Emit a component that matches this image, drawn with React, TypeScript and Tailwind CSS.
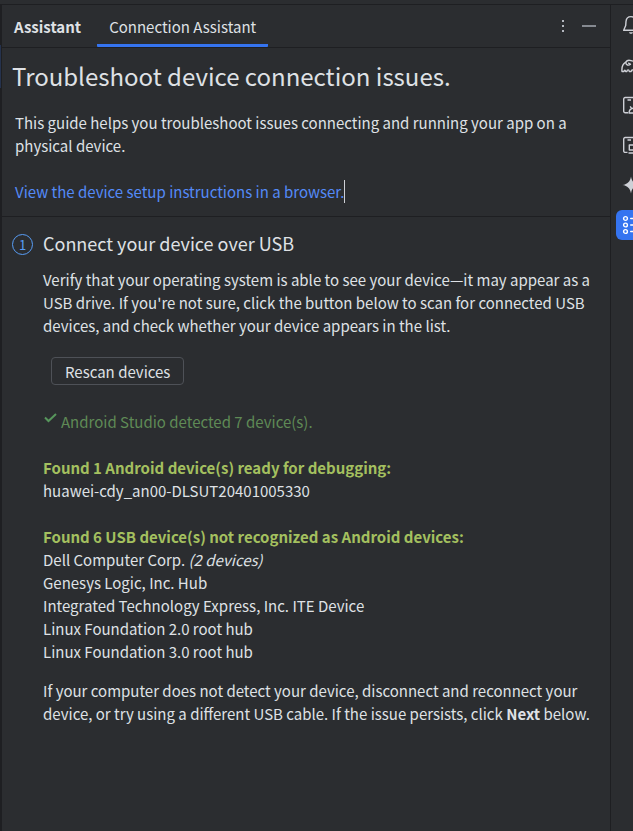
import React from "react";

const otherDevices = [
  { name: "Dell Computer Corp.", note: "(2 devices)" },
  { name: "Genesys Logic, Inc. Hub" },
  { name: "Integrated Technology Express, Inc. ITE Device" },
  { name: "Linux Foundation 2.0 root hub" },
  { name: "Linux Foundation 3.0 root hub" },
];

function BellIcon() {
  return (
    <svg width="20" height="20" viewBox="0 0 20 20" fill="none" stroke="#ced0d6" strokeWidth="1.4" strokeLinejoin="round">
      <path d="M10 1.6C6.800 1.600 5.200 3.800 5 6.500L4.700 10.600L2.700 15.300H17.300L15.300 10.600L15 6.500C14.800 3.800 13.200 1.600 10 1.600Z" />
      <path d="M8 17.200h4c-.3 1-1 1.500-2 1.500s-1.700-.5-2-1.500Z" fill="#ced0d6" stroke="none" />
    </svg>
  );
}

function GradleIcon() {
  return (
    <svg width="20" height="20" viewBox="0 0 20 20" fill="none" stroke="#ced0d6" strokeWidth="1.4" strokeLinejoin="round" strokeLinecap="round">
      <path d="M1 16.500C.5 12 2.500 8.500 4.800 7.200C5.800 5.400 8 4.900 10 5.600C12 6.300 14 6.600 15.500 6C17 5.200 16 3.500 14.800 4.300C15.500 2.500 18.800 3.200 18.800 6C18.800 9 15 10 14.500 16.500H12.500C12.300 14.300 10.500 14.300 10.200 16.500H8.300C8 14.300 6.200 14.300 5.900 16.500H4.600C4.300 14.800 3.300 14.800 3 16.500Z" />
      <path d="M4.800 7.500C4.900 10 7.500 11 9.500 9.300M7.600 8.200l1.200.6" />
    </svg>
  );
}

function DeviceManagerIcon() {
  return (
    <svg width="20" height="20" viewBox="0 0 20 20" fill="none" stroke="#ced0d6" strokeWidth="1.4" strokeLinejoin="round">
      <path d="M7 17.700H4.200A1.500 1.500 0 0 1 2.700 16.200V4A1.500 1.500 0 0 1 4.200 2.500H12.500A1.500 1.500 0 0 1 14 4V9.500M6.500 5h3.500" />
      <path d="M8 18c.2-2.800 2-4.800 5-4.800s4.800 2 5 4.800ZM10.500 13.500L9.200 11.300M15.500 13.500l1.300-2.200" />
    </svg>
  );
}

function RunningDevicesIcon() {
  return (
    <svg width="20" height="20" viewBox="0 0 20 20" fill="none" stroke="#ced0d6" strokeWidth="1.4" strokeLinejoin="round">
      <path d="M6.500 17.400H4.200A1.500 1.500 0 0 1 2.700 15.900V4A1.500 1.500 0 0 1 4.200 2.500H12.500A1.500 1.500 0 0 1 14 4V7M6.500 5h3.500" />
      <path d="M8.300 10H18V15H8.300ZM7.500 18H18.500" />
    </svg>
  );
}

function SparkleIcon() {
  return (
    <svg width="20" height="20" viewBox="0 0 20 20" fill="#ced0d6">
      <path d="M10 1.500C10.700 6.500 13.500 9.300 18.500 10C13.500 10.700 10.700 13.500 10 18.500C9.300 13.500 6.500 10.700 1.500 10C6.500 9.300 9.300 6.500 10 1.500Z" />
    </svg>
  );
}

function ListIcon() {
  return (
    <svg width="20" height="20" viewBox="0 0 20 20" fill="none" stroke="#ffffff" strokeWidth="1.4" strokeLinecap="round">
      <circle cx="4.500" cy="3.500" r="1.900" />
      <circle cx="4.500" cy="10" r="1.900" />
      <circle cx="4.500" cy="16.500" r="1.900" />
      <path d="M9.700 3.500H18M9.700 10H18M9.700 16.500H18" />
    </svg>
  );
}

const railTools = [
  { label: "Notifications", icon: <BellIcon /> },
  { label: "Gradle", icon: <GradleIcon /> },
  { label: "Device Manager", icon: <DeviceManagerIcon /> },
  { label: "Running Devices", icon: <RunningDevicesIcon /> },
  { label: "Gemini", icon: <SparkleIcon /> },
  { label: "Assistant", icon: <ListIcon />, active: true },
];

function Header() {
  return (
    <header className="flex h-[43px] shrink-0 items-stretch border-b border-[#1e1f22] pr-[13px] pl-3">
      <h2 className="flex items-center font-bold">Assistant</h2>
      <button type="button" className="ml-4 flex items-center rounded-[1px] border-b-[3px] border-[#3574f0] px-3 pt-1">
        Connection Assistant
      </button>
      <div className="ml-auto flex items-center gap-2.5">
        <button type="button" aria-label="Options" className="flex size-4 items-center justify-center">
          <svg width="16" height="16" viewBox="0 0 16 16" fill="#b4b8bf">
            <path d="M7 2h2v2H7zM7 7h2v2H7zM7 12h2v2H7z" />
          </svg>
        </button>
        <button type="button" aria-label="Hide" className="flex size-4 items-center justify-center">
          <svg width="16" height="16" viewBox="0 0 16 16" fill="#868a91">
            <path d="M1 7h14v2H1z" />
          </svg>
        </button>
      </div>
    </header>
  );
}

export default function App() {
  return (
    <div className="flex min-h-screen flex-col overflow-hidden bg-[#2b2d30] font-['Noto_Sans_CJK_SC','Noto_Sans',sans-serif] text-[15px] leading-[23px] text-[#dfe1e5]">
      <div className="h-[5px] shrink-0 border-b border-[#1e1f22]" />
      <div className="flex grow">
        <div className="w-0.5 shrink-0 bg-[#1e1f22] pt-10">
          <div className="h-[43px] w-px bg-[#25324d]" />
        </div>
        <main className="flex min-w-0 grow flex-col">
          <Header />
          <section className="border-b border-[#1e1f22] px-2.5 pt-2.5 pb-[13px]">
            <h1 className="text-[24px] leading-[35px]">Troubleshoot device connection issues.</h1>
            <div className="px-[3px] pt-[18px]">
              <p>This guide helps you troubleshoot issues connecting and running your app on a physical device.</p>
              <p className="mt-[23px] flex">
                <a href="#setup" className="text-[#548af7]">View the device setup instructions in a browser.</a>
                <span className="w-px bg-[#ced0d6]" />
              </p>
            </div>
          </section>
          <section className="flex gap-2.5 px-2.5 pt-3">
            <span className="mt-[5px] flex size-[21px] shrink-0 items-center justify-center rounded-full border border-[#589df6] text-[13px] text-[#589df6]">1</span>
            <div className="min-w-0 grow">
              <h2 className="text-lg leading-[29px]">Connect your device over USB</h2>
              <p className="mt-2.5">
                Verify that your operating system is able to see your device—it may appear as a USB drive. If you're not sure, click the button below to scan for connected USB devices, and check whether your device appears in the list.
              </p>
              <button type="button" className="mt-5 ml-2 flex h-7 items-center rounded border border-[#4e5157] px-[13px]">
                Rescan devices
              </button>
              <p className="mt-[25px] flex gap-1 text-[#5f8a56]">
                <svg width="14" height="14" viewBox="0 0 14 14" fill="none" stroke="#57965c" strokeWidth="2">
                  <path d="M2 7.500L5.500 11L13 4" />
                </svg>
                Android Studio detected 7 device(s).
              </p>
              <h3 className="mt-[23px] font-bold text-[#a4c05f]">Found 1 Android device(s) ready for debugging:</h3>
              <p>huawei-cdy_an00-DLSUT20401005330</p>
              <h3 className="mt-[23px] font-bold text-[#a4c05f]">Found 6 USB device(s) not recognized as Android devices:</h3>
              <ul>
                {otherDevices.map((d) => (
                  <li key={d.name}>
                    {d.name} {d.note && <em>{d.note}</em>}
                  </li>
                ))}
              </ul>
              <p className="mt-4">
                If your computer does not detect your device, disconnect and reconnect your device, or try using a different USB cable. If the issue persists, click <b>Next</b> below.
              </p>
            </div>
          </section>
        </main>
        <nav aria-label="Tool windows" className="flex w-[23px] shrink-0 flex-col gap-2.5 overflow-hidden border-l border-[#1e1f22] pt-[5px] pl-[5px]">
          {railTools.map((t) => (
            <button
              key={t.label}
              type="button"
              aria-label={t.label}
              className={`flex size-[30px] shrink-0 items-center justify-center rounded-md ${t.active ? "bg-[#3574f0]" : ""}`}
            >
              {t.icon}
            </button>
          ))}
        </nav>
      </div>
    </div>
  );
}
